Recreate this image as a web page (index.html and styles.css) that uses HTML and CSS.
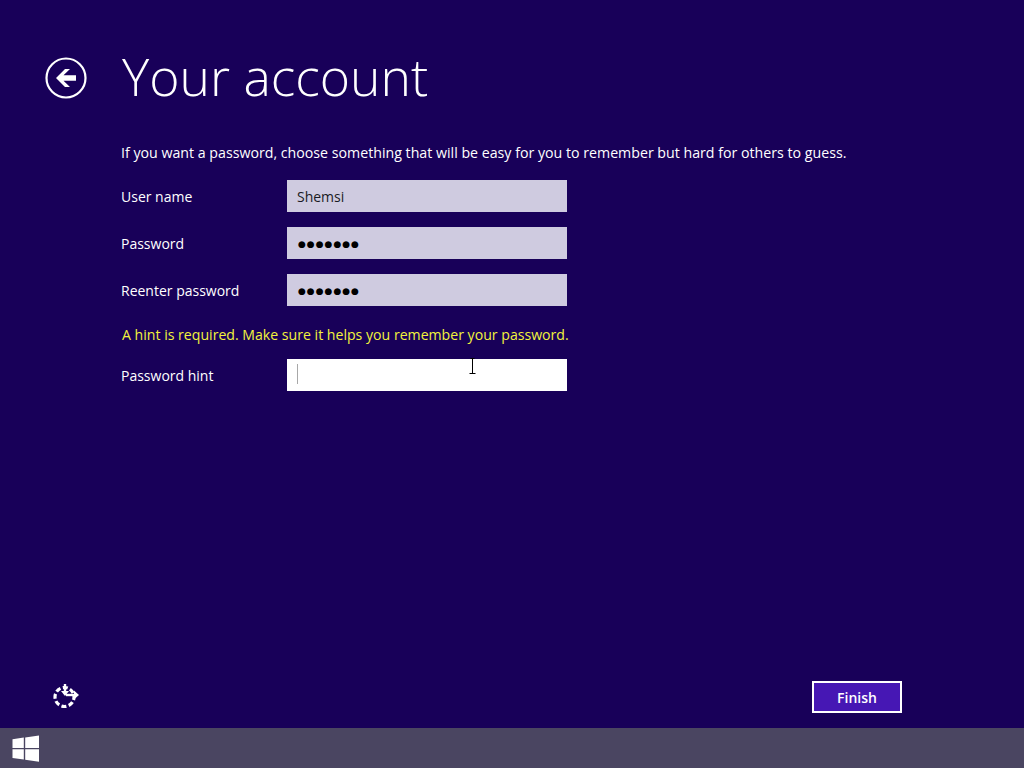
FILE: index.html
```html
<!DOCTYPE html>
<html lang="en">
<head>
<meta charset="utf-8">
<title>Your account</title>
<link rel="stylesheet" href="styles.css">
</head>
<body>
<div class="page">
  <main class="main">
    <header class="header">
      <svg class="back" width="42" height="42" viewBox="0 0 42 42">
        <circle cx="21" cy="21" r="19.5" fill="none" stroke="#fff" stroke-width="2.2"/>
        <path d="M11 21 L20 12 H25 L18.5 18.2 H31 V23.8 H18.5 L25 30 H20 Z" fill="#fff"/>
      </svg>
      <h1 class="title">Your account</h1>
    </header>
    <p class="intro">If you want a password, choose something that will be easy for you to remember but hard for others to guess.</p>
    <div class="form">
      <div class="row">
        <span class="label">User name</span>
        <div class="field">Shemsi</div>
      </div>
      <div class="row">
        <span class="label">Password</span>
        <div class="field dots">●●●●●●●</div>
      </div>
      <div class="row">
        <span class="label">Reenter password</span>
        <div class="field dots">●●●●●●●</div>
      </div>
      <p class="warning">A hint is required. Make sure it helps you remember your password.</p>
      <div class="row">
        <span class="label">Password hint</span>
        <div class="field active">
          <span class="caret"></span>
          <svg class="ibeam" width="9" height="16" viewBox="0 0 9 16">
            <path d="M4.5 0.5 V15 M1.5 15.5 H7.5 M2.5 0.5 H6.5" stroke="#000" stroke-width="1" fill="none"/>
          </svg>
        </div>
      </div>
    </div>
    <div class="footer">
      <svg class="access" width="28" height="26" viewBox="0 0 28 26">
        <circle cx="12.5" cy="14" r="9.5" fill="none" stroke="#fff" stroke-width="3.2" stroke-dasharray="5 2.46" stroke-dashoffset="2"/>
        <path d="M13 1 V9" stroke="#fff" stroke-width="2.4" fill="none"/>
        <path d="M14 12 H23" stroke="#fff" stroke-width="2.4" fill="none"/>
        <path d="M9 8 H17 L13 13 Z" fill="#fff"/>
        <path d="M22 7.5 L27 12 L22 16.5 Z" fill="#fff"/>
      </svg>
      <button class="finish" type="button">Finish</button>
    </div>
  </main>
  <footer class="taskbar">
    <svg class="winlogo" width="28" height="27" viewBox="0 0 28 27">
      <path d="M0.5 4.2 L11.8 2.6 V13 H0.5 Z M13.2 2.4 L27 0.4 V13 H13.2 Z M0.5 14.2 H11.8 V24.6 L0.5 23 Z M13.2 14.2 H27 V26.8 L13.2 24.8 Z" fill="#fff"/>
    </svg>
  </footer>
</div>
</body>
</html>
```
FILE: styles.css
```css
* { box-sizing: border-box; }
html, body { margin: 0; padding: 0; }
body {
  font-family: "Open Sans", "Noto Sans", "Liberation Sans", sans-serif;
  color: #fff;
  background: #180059;
  overflow: hidden;
}
.page {
  display: flex;
  flex-direction: column;
  height: 768px;
}
.main {
  flex: 1;
  display: flex;
  flex-direction: column;
  padding: 0 122px 0 121px;
  position: relative;
}
.header {
  display: flex;
  align-items: center;
  height: 120px;
  padding-top: 36px;
  margin-left: -76px;
}
.back { flex: none; margin-right: 35px; }
.title {
  margin: 0 0 4px;
  font-size: 51.6px;
  font-weight: 300;
  line-height: 84px;
  letter-spacing: 0;
}
.intro {
  margin: 22px 0 16px;
  font-size: 14.2px;
  line-height: 22px;
  white-space: nowrap;
}
.form {
  display: flex;
  flex-direction: column;
  gap: 15px;
}
.row {
  display: grid;
  grid-template-columns: 166px 280px;
  align-items: center;
}
.label { font-size: 14px; line-height: 20px; padding-top: 2px; }
.field {
  height: 32px;
  padding-left: 10px;
  background: #cfcbe0;
  color: #1a1a24;
  font-size: 14px;
  line-height: 34px;
  position: relative;
}
.dots {
  padding-left: 11px;
  color: #000;
  font-family: "DejaVu Sans", sans-serif;
  font-size: 9px;
  letter-spacing: 1px;
  line-height: 34px;
}
.active { background: #fff; }
.caret {
  display: block;
  position: absolute;
  left: 10px;
  top: 5px;
  width: 1px;
  height: 20px;
  background: #a8a8a8;
}
.ibeam { position: absolute; left: 181px; top: -1px; }
.warning {
  margin: 4px 0 -1px 1px;
  color: #f3f33c;
  font-size: 14.12px;
  line-height: 20px;
  white-space: nowrap;
}
.footer {
  margin-top: auto;
  margin-left: -69px;
  margin-right: 0;
  height: 62px;
  display: flex;
  align-items: flex-start;
  justify-content: space-between;
  padding-top: 15px;
}
.access { flex: none; margin-top: 2px; }
.finish {
  width: 90px;
  height: 32px;
  margin-right: 0;
  background: #4617b4;
  border: 2px solid #fff;
  color: #fff;
  font-family: inherit;
  font-size: 14px;
  font-weight: 600;
  padding: 0;
}
.taskbar {
  height: 40px;
  flex: none;
  background: #4a4561;
  display: flex;
  align-items: center;
  padding-left: 12px;
}
.winlogo { flex: none; }
```
